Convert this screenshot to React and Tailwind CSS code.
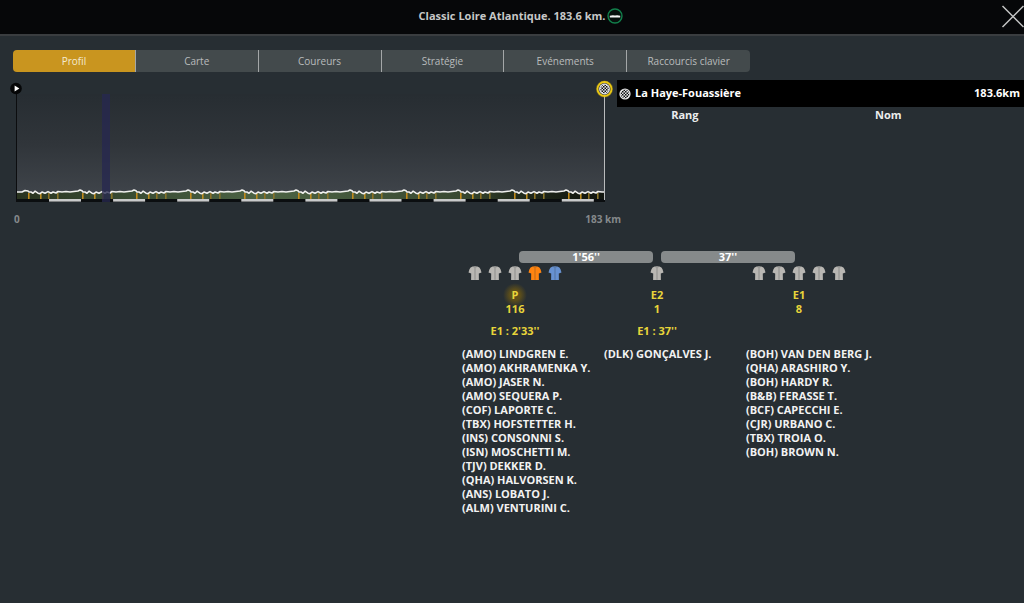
import React, { useState } from 'react';

const tabs = ['Profil', 'Carte', 'Coureurs', 'Stratégie', 'Evénements', 'Raccourcis clavier'];

const gaps = ["1'56''", "37''"];

const groups = [
    {
        id: 'P',
        count: 116,
        delay: "E1 : 2'33''",
        selected: true,
        jerseys: ['#b9b7b3', '#b9b7b3', '#b9b7b3', '#ff8410', '#6791d0'],
        riders: [
            '(AMO) LINDGREN E.', '(AMO) AKHRAMENKA Y.', '(AMO) JASER N.', '(AMO) SEQUERA P.',
            '(COF) LAPORTE C.', '(TBX) HOFSTETTER H.', '(INS) CONSONNI S.', '(ISN) MOSCHETTI M.',
            '(TJV) DEKKER D.', '(QHA) HALVORSEN K.', '(ANS) LOBATO J.', '(ALM) VENTURINI C.'
        ]
    },
    {
        id: 'E2',
        count: 1,
        delay: "E1 : 37''",
        jerseys: ['#b9b7b3'],
        riders: ['(DLK) GONÇALVES J.']
    },
    {
        id: 'E1',
        count: 8,
        delay: '',
        jerseys: ['#b9b7b3', '#b9b7b3', '#b9b7b3', '#b9b7b3', '#b9b7b3'],
        riders: [
            '(BOH) VAN DEN BERG J.', '(QHA) ARASHIRO Y.', '(BOH) HARDY R.', '(B&B) FERASSE T.',
            '(BCF) CAPECCHI E.', '(CJR) URBANO C.', '(TBX) TROIA O.', '(BOH) BROWN N.'
        ]
    }
];

// One lap of the circuit, as [distance, height] steps
const lap = [
    [0, 112], [2, 112], [4, 113.2], [6, 111.2], [9, 113.2], [11, 113.6], [13, 112], [16, 113.2], [19, 111.6], [22, 113.2],
    [24, 112], [27, 113], [29, 111.5], [33, 112], [37, 111.5], [41, 112], [45, 111.5], [49, 111], [51, 110], [53, 110.8]
];

const START = 17;
const FINISH = 605;
const LAP_LENGTH = 54;

const laps = Array.from({ length: 11 }, (_, i) => 29 + i * LAP_LENGTH);

const profile = [
    [START, 112], [22, 112], [25, 110.5], [28, 111],
    ...laps.flatMap((x) => lap.map(([dx, y]) => [x + dx, y]))
].filter(([x]) => x <= FINISH);

const profileLine = [...profile, [FINISH, 112]].map((p) => p.join(',')).join(' ');

const markers = laps
    .flatMap((x) => [
        { x, color: '#c08a1c' },
        { x: x + 12, color: '#b98a1e' },
        { x: x + 20, color: '#8c7024' },
        { x: x + 29, color: '#86722a' }
    ])
    .filter((m) => m.x < FINISH);

const Checkers = ({ cx, cy, r }) => (
    <g>
        <circle cx={cx} cy={cy} r={r} fill="#e6e6e6" />
        <circle cx={cx} cy={cy} r={r - 1.2} fill="url(#checkers)" />
    </g>
);

const Jersey = ({ color }) => (
    <svg viewBox="0 0 14 16" className="w-3.5 h-4">
        <path
            d="M4.6 1.6 Q7 1 9.4 1.6 L11.4 2.6 Q12.6 3.6 13.5 7.6 L10.8 8.6 L10.9 15 L3.1 15 L3.2 8.6 L.5 7.6 Q1.4 3.6 2.6 2.6 Z"
            fill={color}
        />
        <path d="M7 2.4 V14.8" stroke="#272e33" strokeOpacity=".3" strokeWidth="1" />
        <path d="M5 1.8 Q7 2.8 9 1.8" fill="none" stroke="#272e33" strokeOpacity=".25" strokeWidth=".7" />
    </svg>
);

const ProfileChart = () => (
    <svg viewBox="0 0 617 124" className="block w-full h-auto overflow-visible">
        <defs>
            <linearGradient id="sky" x1="0" y1="0" x2="0" y2="1">
                <stop offset="0" stopColor="#272d32" />
                <stop offset=".5" stopColor="#30353a" />
                <stop offset="1" stopColor="#3f444a" />
            </linearGradient>
            <linearGradient id="ground" gradientUnits="userSpaceOnUse" x1="17" y1="0" x2="605" y2="0">
                <stop offset="0" stopColor="#29331f" />
                <stop offset=".12" stopColor="#33442e" />
                <stop offset=".42" stopColor="#4c6344" />
                <stop offset=".75" stopColor="#394932" />
                <stop offset=".86" stopColor="#20291b" />
                <stop offset="1" stopColor="#11150f" />
            </linearGradient>
            <pattern id="checkers" width="3" height="3" patternUnits="userSpaceOnUse">
                <rect width="1.5" height="1.5" fill="#0c0e10" />
                <rect x="1.5" y="1.5" width="1.5" height="1.5" fill="#0c0e10" />
            </pattern>
        </defs>

        <rect x="17" y="14" width="588" height="100" fill="url(#sky)" />
        <polygon points={`${START},119 ${profileLine} ${FINISH},119`} fill="url(#ground)" />
        {markers.map((m) => (
            <rect key={m.x} x={m.x - 1} y="113" width="1.6" height="6" fill={m.color} />
        ))}
        <polyline points={profileLine} fill="none" stroke="#f0f0ee" strokeWidth="1.6" strokeLinejoin="round" />

        {/* Distance scale, one block every 10 km */}
        <rect x="17" y="119" width="588" height="3" fill="#0b0e10" />
        {Array.from({ length: 9 }, (_, i) => (
            <rect key={i} x={49 + i * 64.1} y="119" width="32" height="2.6" fill="#c9cacb" />
        ))}

        <rect x="102" y="14" width="8" height="108" fill="#27284f" fillOpacity=".78" />

        <line x1="16.5" y1="14" x2="16.5" y2="122" stroke="#0c0d0f" />
        <line x1="604.5" y1="16" x2="604.5" y2="120" stroke="#b9bbbc" />

        <circle cx="16" cy="8.5" r="5.8" fill="#050607" />
        <path d="M14.6 5.6 L19.4 8.6 L14.6 11.6 Z" fill="#fff" />

        <circle cx="604.5" cy="9" r="8.6" fill="#e0c010" fillOpacity=".35" />
        <circle cx="604.5" cy="9" r="7" fill="#30343a" stroke="#edca14" strokeWidth="1.8" />
        <Checkers cx={604.5} cy={9} r={5.4} />
    </svg>
);

const Group = ({ group }) => (
    <section className="w-[142px]">
        <div className="flex justify-center gap-1.5 h-4">
            {group.jerseys.map((color, i) => (
                <Jersey key={i} color={color} />
            ))}
        </div>
        <div className="mt-[7px] text-center leading-[14px] text-[#e8d53a]">
            <h2 className="relative">
                {group.selected && (
                    <span className="absolute left-1/2 top-1/2 size-6 -translate-x-1/2 -translate-y-1/2 rounded-full bg-radial from-[#5e4f1a] from-30% to-transparent to-70%" />
                )}
                <span className="relative">{group.id}</span>
            </h2>
            <p>{group.count}</p>
            <p className="mt-2 h-3.5">{group.delay}</p>
        </div>
        <ul className="mt-[9px] pl-[18px] leading-[14px] text-[#f2f2f2] whitespace-nowrap">
            {group.riders.map((rider) => (
                <li key={rider}>{rider}</li>
            ))}
        </ul>
    </section>
);

const App = () => {
    const [active, setActive] = useState('Profil');

    return (
        <div className="min-h-screen bg-[#272e33] font-['Open_Sans','Noto_Sans',sans-serif] text-[11px] font-bold text-white">
            <header className="grid grid-cols-[1fr_auto_1fr] items-center h-9 bg-[#060709] border-b-2 border-[#3a3d40]">
                <h1 className="col-start-2 pb-0.5 text-[#c6c7c7]">Classic Loire Atlantique. 183.6 km.</h1>
                <div className="flex items-center justify-between pl-0.5 pb-0.5">
                    <svg viewBox="0 0 16 16" className="size-4">
                        <circle cx="8" cy="8" r="7" fill="#07100d" stroke="#12804c" strokeWidth="1.4" />
                        <path d="M2.8 7.8 Q5 7 8 7.5 Q11 7 13.2 7.8 V9.6 H2.8 Z" fill="#f4f4f4" />
                    </svg>
                    <button aria-label="Fermer" className="cursor-pointer">
                        <svg viewBox="0 0 23 23" className="size-[23px]">
                            <path d="M1.5 1 L22.5 22 M22.5 1 L1.5 22" stroke="#c4c5c5" strokeWidth="1.5" />
                        </svg>
                    </button>
                </div>
            </header>

            <nav role="tablist" className="grid grid-cols-6 max-w-[737px] mt-3.5 ml-[13px] h-[22px] rounded overflow-hidden divide-x divide-[#a4a7a8]">
                {tabs.map((tab) => (
                    <button
                        key={tab}
                        role="tab"
                        aria-selected={active === tab}
                        onClick={() => setActive(tab)}
                        className={`text-[10px] font-normal cursor-pointer ${active === tab ? 'bg-[#c9951f] text-[#f3ead2]' : 'bg-[#434a4c] text-[#b9bcbc]'}`}
                    >
                        {tab}
                    </button>
                ))}
            </nav>

            <main>
                <div className="grid grid-cols-[617fr_407fr] items-start mt-2">
                    <div>
                        <ProfileChart />
                        <div className="flex justify-between mt-2 pl-3.5 -mr-1 text-[10px] text-[#85898b]">
                            <span>0</span>
                            <span>183 km</span>
                        </div>
                    </div>

                    <section>
                        <div className="flex items-center gap-1 h-[27px] pl-0.5 pr-1 bg-black">
                            <svg viewBox="0 0 12 12" className="size-3">
                                <Checkers cx={6} cy={6} r={5.6} />
                            </svg>
                            <h2 className="flex-1">La Haye-Fouassière</h2>
                            <span>183.6km</span>
                        </div>
                        <table className="w-full table-fixed">
                            <thead>
                                <tr className="text-[#eceded]">
                                    <th className="w-1/3">Rang</th>
                                    <th>Nom</th>
                                </tr>
                            </thead>
                        </table>
                    </section>
                </div>

                <div className="flex justify-end mt-6 pr-[154px]">
                    <div>
                        <div className="flex justify-center gap-2">
                            {gaps.map((gap) => (
                                <div key={gap} className="w-[134px] h-3 rounded bg-[#868a8b] text-center leading-3">
                                    {gap}
                                </div>
                            ))}
                        </div>
                        <div className="flex mt-0.5">
                            {groups.map((group) => (
                                <Group key={group.id} group={group} />
                            ))}
                        </div>
                    </div>
                </div>
            </main>
        </div>
    );
};

export default App;
